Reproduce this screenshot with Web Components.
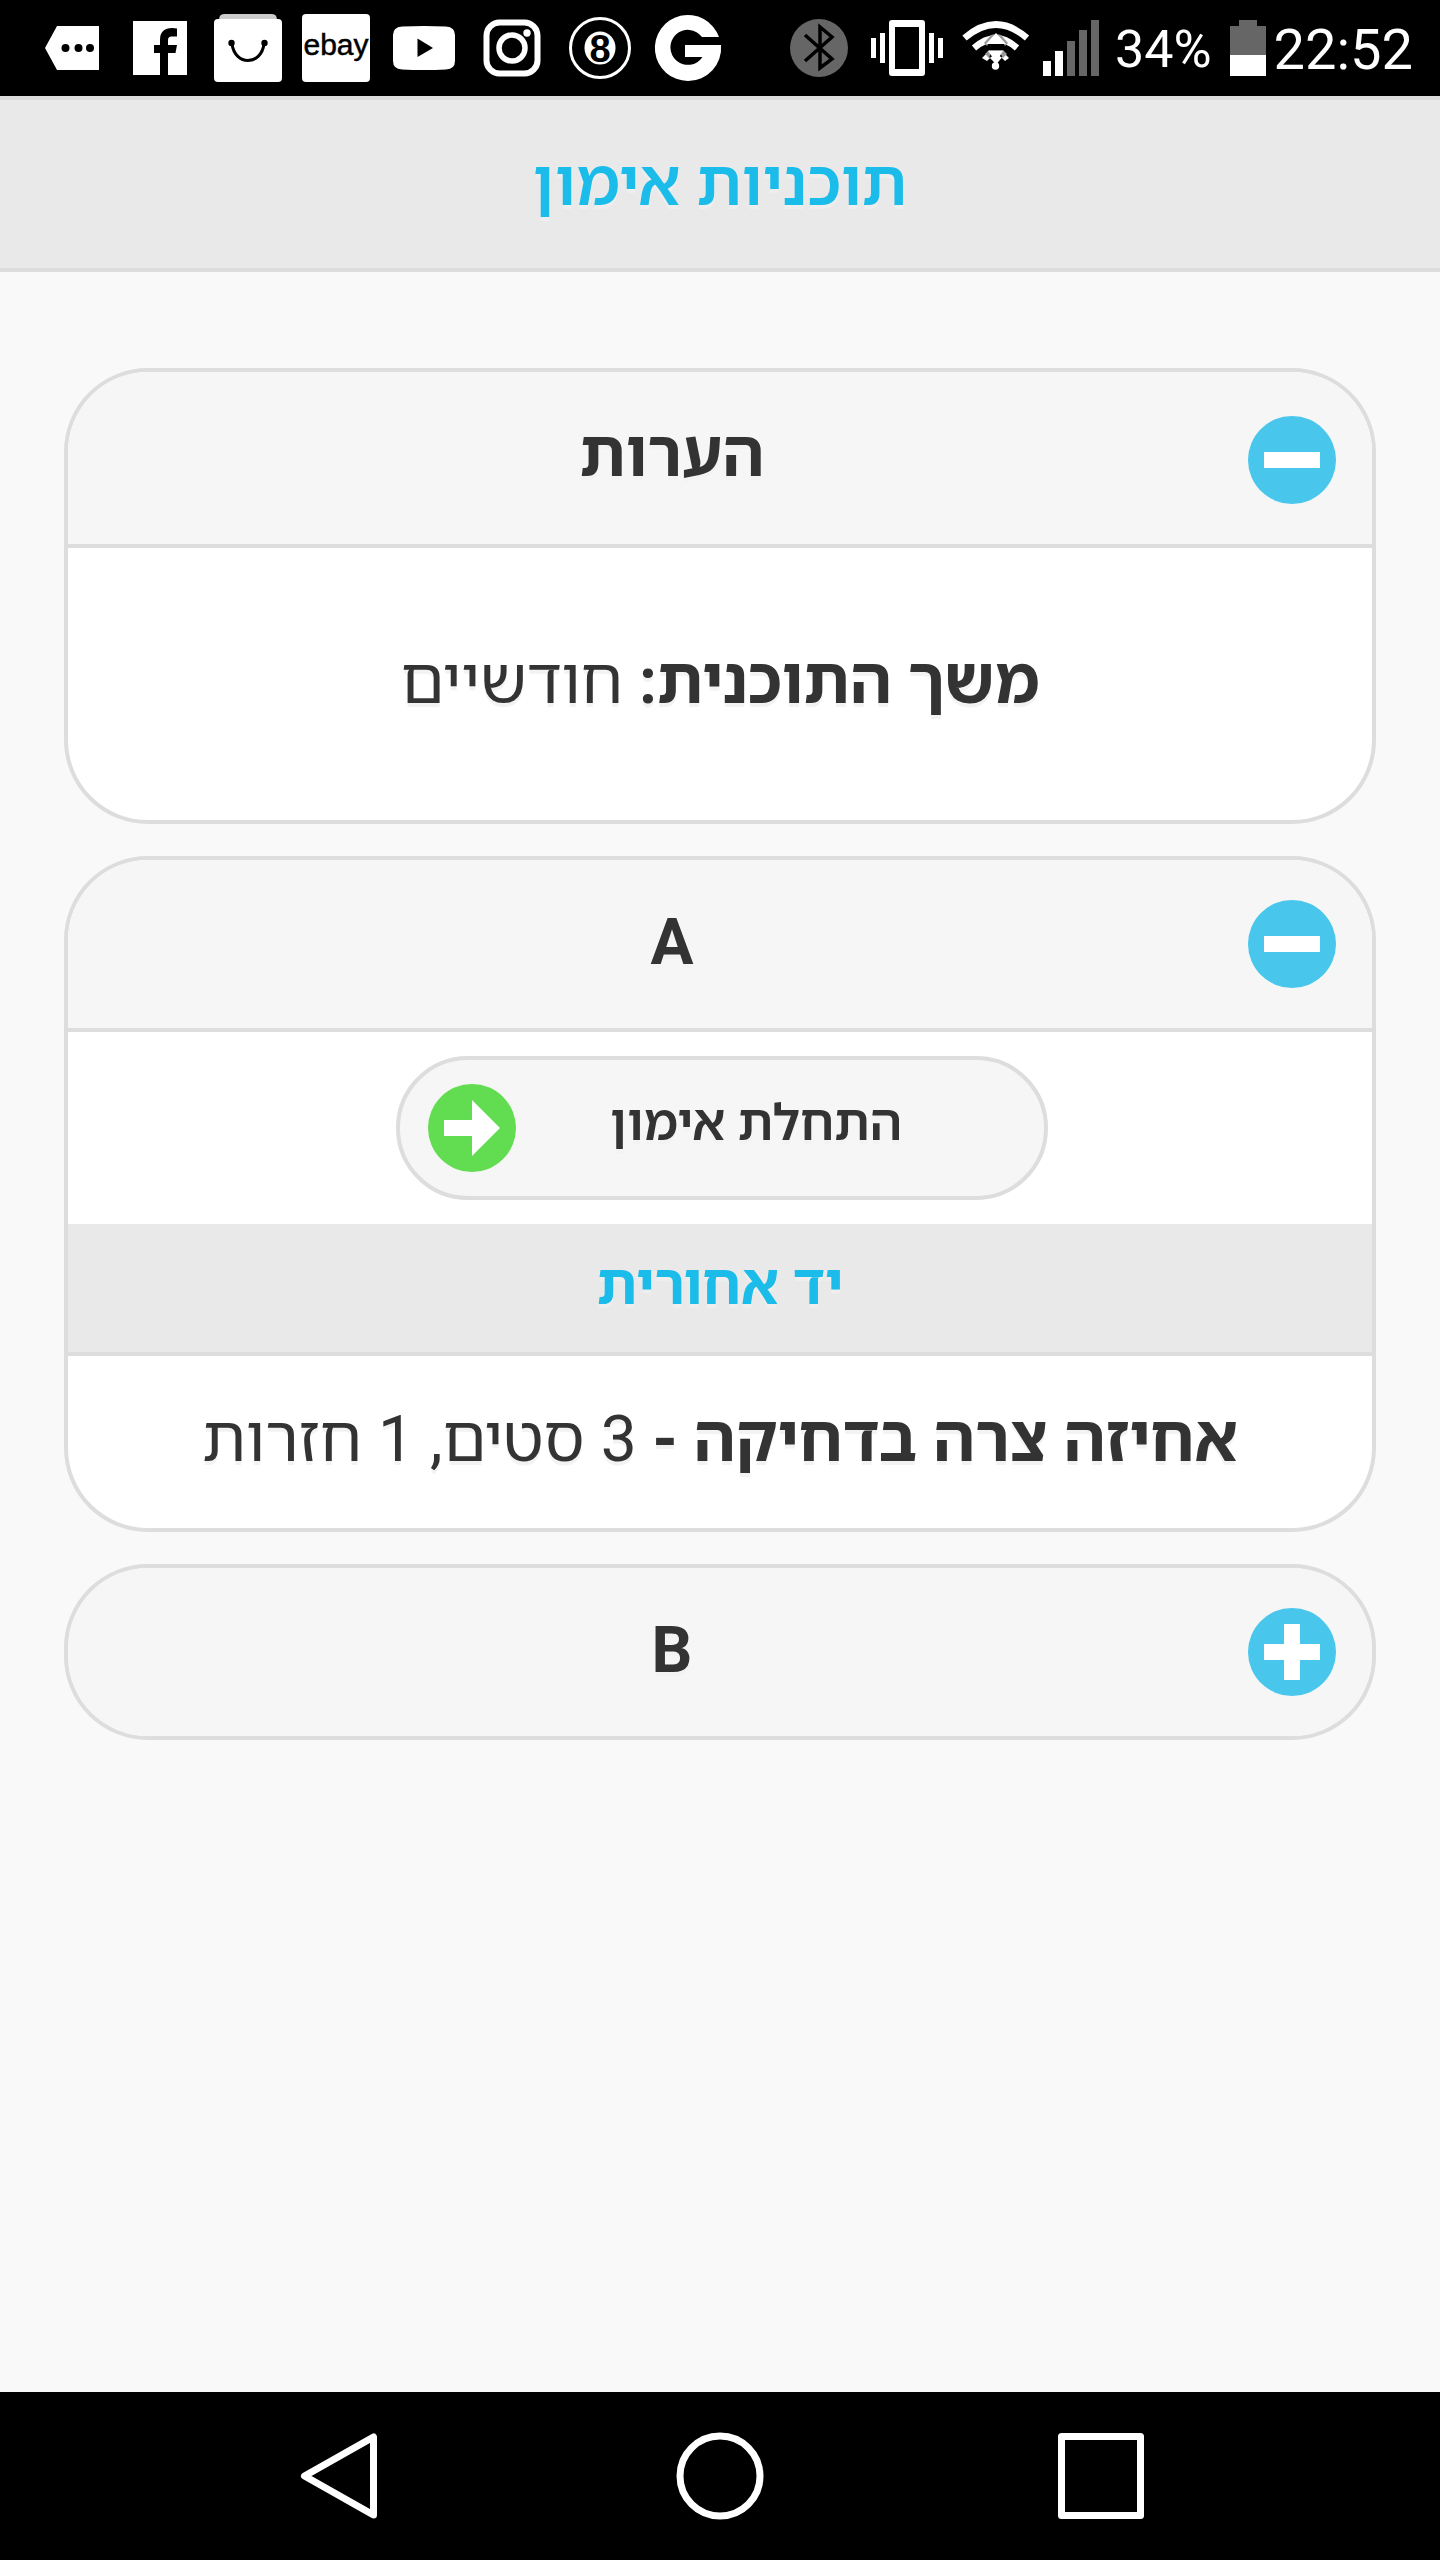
<!DOCTYPE html>
<html lang="he" dir="rtl">
<head>
<meta charset="utf-8">
<meta name="viewport" content="width=device-width, initial-scale=1">
<title>תוכניות אימון</title>
<style>
  html, body { margin: 0; }
  body {
    background: #f9f9f9;
    color: #333;
    font-family: Roboto, "Noto Sans Hebrew", "Open Sans", "Noto Sans", sans-serif;
    font-size: 64px;
    line-height: 80px;
    --line: #ddd;
    --bar: #e9e9e9;
    --tile: #f6f6f6;
    --accent: #1bbce9;
    --shadow: 0 4px 0 #f3f3f3;
  }
</style>
</head>
<body>
<app-screen>
  <status-bar slot="top"></status-bar>
  <page-header slot="top">תוכניות אימון</page-header>
  <fold-card heading="הערות" open roomy>
    <text-line tall><b>משך התוכנית:</b> חודשיים</text-line>
  </fold-card>
  <fold-card heading="A" open>
    <start-button>התחלת אימון</start-button>
    <muscle-divider>יד אחורית</muscle-divider>
    <text-line><b>אחיזה צרה בדחיקה -</b> 3 סטים, 1 חזרות</text-line>
  </fold-card>
  <fold-card heading="B"></fold-card>
  <nav-bar slot="bottom"></nav-bar>
</app-screen>

<script>
const define = (name, html, setup) => {
  const template = document.createElement('template');
  template.innerHTML = html;
  customElements.define(name, class extends HTMLElement {
    connectedCallback() {
      if (this.shadowRoot) return;
      this.attachShadow({ mode: 'open' }).append(template.content.cloneNode(true));
      if (setup) setup(this, this.shadowRoot);
    }
  });
};

define('app-screen', `
  <style>
    :host { display: flex; flex-direction: column; min-height: 100vh; }
    main { flex: 1; display: flex; flex-direction: column; gap: 32px; padding: 96px 64px; }
  </style>
  <slot name="top"></slot>
  <main><slot></slot></main>
  <slot name="bottom"></slot>`);

define('status-bar', `
  <style>
    :host { display: flex; direction: ltr; justify-content: space-between; align-items: center; height: 96px; padding: 0 27px 0 28px; background: #000; color: #fff; line-height: 64px; }
    div { display: flex; align-items: center; }
    svg { display: block; height: 96px; fill: #fff; }
    span { padding-top: 3px; }
    .level { font-size: 52px; }
    .clock { font-size: 56px; }
    .ebay { font: 30px "Liberation Sans", sans-serif; fill: #000; stroke: #000; stroke-width: 0.5; }
    .eight { font: bold 38px "Liberation Sans", sans-serif; fill: #000; }
  </style>
  <div>
    <svg viewBox="28 0 88 96" width="88"><path d="M45 48 57 26H99V70H57Z"/><g fill="#000"><circle cx="65.5" cy="48" r="4"/><circle cx="78.5" cy="48" r="4"/><circle cx="90" cy="48" r="4"/></g></svg>
    <svg viewBox="116 0 88 96" width="88"><path d="M133 21H187V75H168V53H175.500L177 45H168V40Q168 36.500 171.500 36.500H177V28.500Q160 26 160 40V45H154V53H160V75H133Z"/></svg>
    <svg viewBox="204 0 88 96" width="88"><path fill="#ccc" d="M219 20Q219 14 224 14H272Q277 14 277 20Z"/><rect x="214" y="19" width="68" height="63" rx="4"/><path d="M232 44C235 66 261 66 264 44" fill="none" stroke="#000" stroke-width="3"/><g fill="#000"><circle cx="231.500" cy="43" r="3.200"/><circle cx="264.500" cy="43" r="3.200"/></g></svg>
    <svg viewBox="292 0 88 96" width="88"><rect x="302" y="14" width="68" height="68" rx="4"/><text class="ebay" x="336" y="55" text-anchor="middle">ebay</text></svg>
    <svg viewBox="380 0 88 96" width="88"><path d="M402 26.500Q424 25.500 446 26.500Q455 27 455 35V61Q455 69 446 69.500Q424 70.500 402 69.500Q393 69 393 61V35Q393 27 402 26.500Z"/><path fill="#000" d="M417.500 38.500V57L433 48Z"/></svg>
    <svg viewBox="468 0 88 96" width="88"><g fill="none" stroke="#fff"><rect x="486.500" y="22.500" width="51" height="51" rx="13" stroke-width="6"/><circle cx="512" cy="48" r="13" stroke-width="5.500"/></g><circle cx="527" cy="33" r="3.700"/></svg>
    <svg viewBox="556 0 88 96" width="88"><circle cx="600" cy="48" r="29.500" fill="none" stroke="#fff" stroke-width="3"/><ellipse cx="600" cy="48" rx="15.500" ry="16.500"/><text class="eight" x="600" y="62" text-anchor="middle">8</text></svg>
    <svg viewBox="644 0 88 96" width="88"><path d="M719 37A33 33 0 1 0 688 81A33 33 0 0 0 721 45H685V57H702.500A17.500 17.500 0 1 1 702 37Z"/></svg>
  </div>
  <div>
    <svg viewBox="784 0 80 96" width="80"><circle cx="819" cy="48" r="29" fill="#666"/><path d="M805 35 832 59 820 68V27L832 37 805 61" fill="none" stroke="#000" stroke-width="3.500"/></svg>
    <svg viewBox="864 0 88 96" width="88"><path fill-rule="evenodd" d="M892 20H922Q925 20 925 23V73Q925 76 922 76H892Q889 76 889 73V23Q889 20 892 20ZM895 27V69H919V27Z"/><path d="M871 38h5v20h-5ZM880 33h5v30h-5ZM929 33h5v30h-5ZM938 38h5v20h-5Z"/></svg>
    <svg viewBox="952 0 84 96" width="84"><g fill="none" stroke="#fff" stroke-width="6.500"><path d="M964.500 38Q996 11 1027 38"/><path d="M974 48Q996 29 1017 48"/></g><path d="M982 58 986 54 993 61 996 65 999 61 1005 54 1009 58 1005 61 1001 57Q996 52 991 57L987 61Z"/><path fill="#999" d="M984 43 991 35 995 34 987 46ZM1008 43 1001 35 997 34 1005 46ZM985 54 989 50 1003 50 1007 54 1003 58 1000 53H991L989 58Z"/><path d="M986 44 996 33 1006 44ZM988 51H1003L996 62Z"/><circle cx="995.500" cy="66" r="3.700"/></svg>
    <svg viewBox="1036 0 79 96" width="79"><path d="M1043 61h8v15h-8ZM1055 51h8v25h-8Z"/><path fill="#666" d="M1067 41h8v35h-8ZM1079 30h8v46h-8ZM1091 20h8v56h-8Z"/></svg>
    <span class="level">34%</span>
    <svg viewBox="1211 0 62 96" width="62"><path fill="#666" d="M1238 20h18v6h9v29h-36V26h9Z"/><path d="M1229 55h36v21h-36Z"/></svg>
    <span class="clock">22:52</span>
  </div>`);

define('page-header', `
  <style>
    :host { display: block; background: var(--bar); border-block: 4px solid var(--line); }
    h1 { margin: 0; padding: 44px 64px; font: inherit; font-weight: 600; text-align: center; color: var(--accent); text-shadow: 0 4px 0 #eee; }
  </style>
  <h1><slot></slot></h1>`);

define('fold-card', `
  <style>
    :host { display: block; overflow: hidden; border: 4px solid var(--line); border-radius: 84px; background: #fff; text-shadow: var(--shadow); }
    h2 { margin: 0; font: inherit; }
    button { display: flex; align-items: flex-start; gap: 36px; box-sizing: border-box; width: 100%; min-height: 168px; padding: 40px 36px 40px 64px; border: 0; background: var(--tile); color: inherit; font: inherit; font-weight: bold; text-shadow: inherit; cursor: pointer; }
    :host([roomy]) svg { margin-top: 4px; }
    span { flex: 1; padding-top: 3px; text-align: center; }
    svg { flex: none; width: 88px; height: 88px; }
    .body { border-top: 4px solid var(--line); }
    :host(:not([open])) .body, :host([open]) .upright { display: none; }
  </style>
  <h2><button type="button" aria-controls="body">
    <svg viewBox="0 0 88 88" aria-hidden="true"><circle cx="44" cy="44" r="44" fill="#48c6ec"/><path fill="#fff" d="M16 36h56v16H16Z"/><path class="upright" fill="#fff" d="M36 16h16v56H36Z"/></svg>
    <span></span>
  </button></h2>
  <div class="body" id="body"><slot></slot></div>`, (host, root) => {
  const button = root.querySelector('button');
  root.querySelector('span').textContent = host.getAttribute('heading');
  button.setAttribute('aria-expanded', host.hasAttribute('open'));
  button.addEventListener('click', () => {
    button.setAttribute('aria-expanded', host.toggleAttribute('open'));
  });
});

define('text-line', `
  <style>
    :host { display: block; }
    p { margin: 0; padding: 44px 64px 48px; text-align: center; }
    :host([tall]) p { padding-block: 94px 98px; }
  </style>
  <p><slot></slot></p>`);

define('start-button', `
  <style>
    :host { display: flex; justify-content: center; padding: 24px 60px 24px 64px; }
    button { display: flex; align-items: center; direction: ltr; box-sizing: border-box; width: 652px; height: 144px; padding: 0 36px 0 28px; border: 4px solid var(--line); border-radius: 72px; background: var(--tile); color: inherit; font: inherit; font-size: 50px; font-weight: 600; text-shadow: inherit; cursor: pointer; }
    span { flex: 1; padding: 0 12px 10px 0; text-align: center; }
    svg { flex: none; width: 88px; height: 88px; }
  </style>
  <button type="button">
    <svg viewBox="0 0 88 88" aria-hidden="true"><circle cx="44" cy="44" r="44" fill="#62dc50"/><path fill="#fff" d="M16 36H44V16L72 44 44 72V52H16Z"/></svg>
    <span dir="rtl"><slot></slot></span>
  </button>`);

define('muscle-divider', `
  <style>
    :host { display: block; background: var(--bar); border-bottom: 4px solid var(--line); }
    h3 { margin: 0; padding: 21px 64px 27px; font: inherit; font-size: 56px; font-weight: bold; text-align: center; color: var(--accent); text-shadow: 0 4px 0 #eee; }
  </style>
  <h3><slot></slot></h3>`);

define('nav-bar', `
  <style>
    :host { display: flex; direction: ltr; height: 168px; padding: 0 148px; background: #000; }
    button { flex: 1; display: flex; align-items: center; justify-content: center; padding: 0; border: 0; background: none; cursor: pointer; }
    svg { width: 88px; height: 88px; fill: none; stroke: #fff; stroke-width: 7; stroke-linejoin: round; }
  </style>
  <button type="button" aria-label="חזרה"><svg viewBox="0 0 88 88"><path d="M9.500 44 78.500 5V83Z"/></svg></button>
  <button type="button" aria-label="בית"><svg viewBox="0 0 88 88"><circle cx="44" cy="44" r="40"/></svg></button>
  <button type="button" aria-label="אחרונים"><svg viewBox="0 0 88 88"><path d="M4.500 4.500H83.500V83.500H4.500Z"/></svg></button>`);
</script>
</body>
</html>
